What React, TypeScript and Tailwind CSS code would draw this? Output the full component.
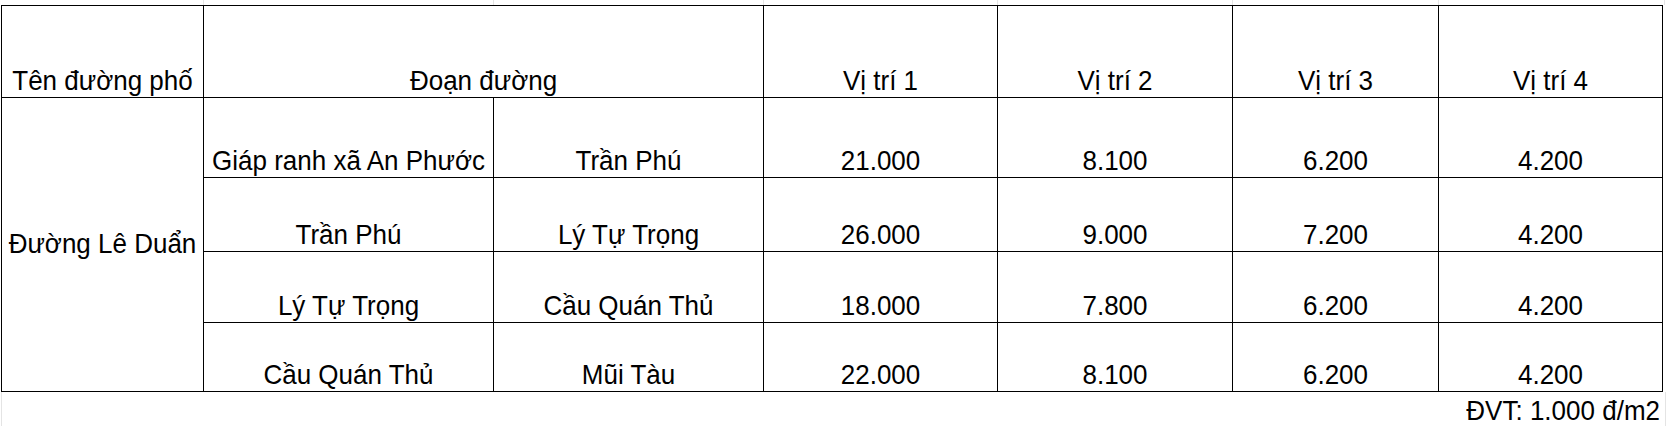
import React from "react";

const rows = [
  { from: "Giáp ranh xã An Phước", to: "Trần Phú", v: ["21.000", "8.100", "6.200", "4.200"], h: "h-[80px]" },
  { from: "Trần Phú", to: "Lý Tự Trọng", v: ["26.000", "9.000", "7.200", "4.200"], h: "h-[74px]" },
  { from: "Lý Tự Trọng", to: "Cầu Quán Thủ", v: ["18.000", "7.800", "6.200", "4.200"], h: "h-[71px]" },
  { from: "Cầu Quán Thủ", to: "Mũi Tàu", v: ["22.000", "8.100", "6.200", "4.200"], h: "h-[69px]" },
];

const cell = "border border-black align-bottom text-center pb-0 px-0 leading-[1.15] whitespace-nowrap";

function T({ children }: { children: React.ReactNode }) {
  return <span className="inline-block scale-y-[1.05] origin-bottom">{children}</span>;
}

export default function App() {
  return (
    <div className="w-[1666px] h-[426px] bg-white overflow-hidden font-['Liberation_Sans',Arial,sans-serif] text-[26px] text-black">
      <div className="flex h-[5px]">
        <div className="w-[203px]" />
        <div className="w-[290px] border-l border-[#e4e4e4]" />
        <div className="w-[270px] border-l border-[#e4e4e4]" />
        <div className="w-[234px] border-l border-[#e4e4e4]" />
        <div className="w-[235px] border-l border-[#e4e4e4]" />
        <div className="w-[206px] border-l border-[#e4e4e4]" />
        <div className="w-[227px] border-l border-[#e4e4e4] border-r" />
      </div>
      <table className="ml-[1px] border-collapse table-fixed w-[1661px]">
        <colgroup>
          <col className="w-[202px]" />
          <col className="w-[290px]" />
          <col className="w-[270px]" />
          <col className="w-[234px]" />
          <col className="w-[235px]" />
          <col className="w-[206px]" />
          <col className="w-[224px]" />
        </colgroup>
        <tbody>
          <tr className="h-[92px]">
            <td className={cell}><T>Tên đường phố</T></td>
            <td className={cell} colSpan={2}><T>Đoạn đường</T></td>
            <td className={cell}><T>Vị trí 1</T></td>
            <td className={cell}><T>Vị trí 2</T></td>
            <td className={cell}><T>Vị trí 3</T></td>
            <td className={cell}><T>Vị trí 4</T></td>
          </tr>
          {rows.map((r, i) => (
            <tr key={i} className={r.h}>
              {i === 0 && (
                <td rowSpan={4} className="border border-black align-middle text-center px-0 leading-[1.15] whitespace-nowrap">
                  <T>Đường Lê Duẩn</T>
                </td>
              )}
              <td className={cell}><T>{r.from}</T></td>
              <td className={cell}><T>{r.to}</T></td>
              {r.v.map((x, j) => (
                <td key={j} className={cell}><T>{x}</T></td>
              ))}
            </tr>
          ))}
        </tbody>
      </table>
      <div className="flex h-[35px] ml-[1px] w-[1665px] border-l border-r border-[#e4e4e4]">
        <div className="flex-1 flex items-end justify-end pr-[5px] leading-none pb-[3px]"><T>ĐVT: 1.000 đ/m2</T></div>
      </div>
    </div>
  );
}
